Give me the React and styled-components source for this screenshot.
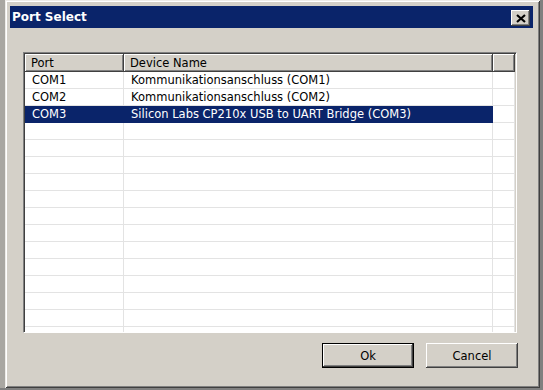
import React from 'react';
import styled, { createGlobalStyle, css } from 'styled-components';

const Global = createGlobalStyle`
  html, body { margin: 0; padding: 0; background: #808080; }
  body { font-family: "DejaVu Sans", Verdana, sans-serif; font-size: 11.5px; color: #000; }
`;

const face = '#d4d0c8';
const navy = '#0a246a';

const raised = css`
  box-shadow: inset -1px -1px 0 #404040, inset 1px 1px 0 #fff, inset -2px -2px 0 #808080;
`;

const Frame = styled.div`
  box-sizing: border-box;
  width: 540px;
  height: 388px;
  background: ${face};
  border-left: 5px solid #a9a7a2;
  padding: 6px 7px 0 5px;
  display: flex;
  flex-direction: column;
  box-shadow: inset 1px 1px 0 #eeece8, inset -1px -1px 0 #404040, inset 2px 2px 0 #fff, inset -2px -2px 0 #808080;
`;

const TitleBar = styled.div`
  height: 22px;
  background: ${navy};
  display: flex;
  align-items: center;
  justify-content: space-between;
  padding: 0 3px 0 2px;
`;

const Title = styled.span`
  color: #fff;
  font-weight: bold;
  font-size: 12px;
`;

const CloseBtn = styled.div`
  width: 19px;
  height: 16px;
  margin-top: 2px;
  background: ${face};
  display: flex;
  align-items: center;
  justify-content: center;
  ${raised}
`;

const Body = styled.div`
  padding: 24px 0 0 13px;
  display: flex;
  flex-direction: column;
`;

const ListView = styled.div`
  box-sizing: border-box;
  width: 494px;
  height: 281px;
  background: #fff;
  overflow: hidden;
  border: 1px solid;
  border-color: #808080 #fff #fff #808080;
  box-shadow: inset 1px 1px 0 #404040, inset -1px -1px 0 ${face};
  padding: 1px;
`;

const cols = '99px 369px 1fr';

const Header = styled.div`
  display: grid;
  grid-template-columns: ${cols};
  height: 18px;
`;

const HeadCell = styled.div`
  background: ${face};
  padding: 0 6px;
  display: flex;
  align-items: center;
  ${raised}
`;

const Row = styled.div`
  display: grid;
  grid-template-columns: ${cols};
  height: 17px;
`;

const Cell = styled.div`
  box-sizing: border-box;
  padding: 0 7px;
  display: flex;
  align-items: center;
  white-space: nowrap;
  border-bottom: 1px solid #e3e3e3;
  border-right: 1px solid #e3e3e3;
  background: ${(p) => (p.$sel ? navy : '#fff')};
  color: ${(p) => (p.$sel ? '#fff' : '#000')};
  ${(p) => p.$sel && css`border-bottom-color: ${navy}; border-right-color: ${navy};`}
`;

const Buttons = styled.div`
  display: flex;
  justify-content: flex-end;
  gap: 12px;
  width: 495px;
  margin-top: 10px;
`;

const Button = styled.button`
  box-sizing: border-box;
  width: 92px;
  height: 25px;
  background: ${face};
  border: none;
  font: inherit;
  color: #000;
  padding: 0;
  ${(p) =>
    p.$default
      ? css`
          box-shadow: inset 0 0 0 1px #000, inset -2px -2px 0 #404040, inset 2px 2px 0 #fff, inset -3px -3px 0 #808080;
        `
      : raised}
`;

const rows = [
  ['COM1', 'Kommunikationsanschluss (COM1)'],
  ['COM2', 'Kommunikationsanschluss (COM2)'],
  ['COM3', 'Silicon Labs CP210x USB to UART Bridge (COM3)', true],
];

export default function App() {
  const filled = [...rows];
  while (filled.length < 16) filled.push(['', '']);
  return (
    <>
      <Global />
      <Frame>
        <TitleBar>
          <Title>Port Select</Title>
          <CloseBtn>
            <svg width="10" height="9" viewBox="0 0 10 9">
              <path d="M1 1 L9 8 M9 1 L1 8" stroke="#000" strokeWidth="2.2" />
            </svg>
          </CloseBtn>
        </TitleBar>
        <Body>
          <ListView>
            <Header>
              <HeadCell>Port</HeadCell>
              <HeadCell>Device Name</HeadCell>
              <HeadCell />
            </Header>
            {filled.map(([port, name, sel], i) => (
              <Row key={i}>
                <Cell $sel={sel}>{port}</Cell>
                <Cell $sel={sel}>{name}</Cell>
                <Cell />
              </Row>
            ))}
          </ListView>
          <Buttons>
            <Button $default>Ok</Button>
            <Button>Cancel</Button>
          </Buttons>
        </Body>
      </Frame>
    </>
  );
}
